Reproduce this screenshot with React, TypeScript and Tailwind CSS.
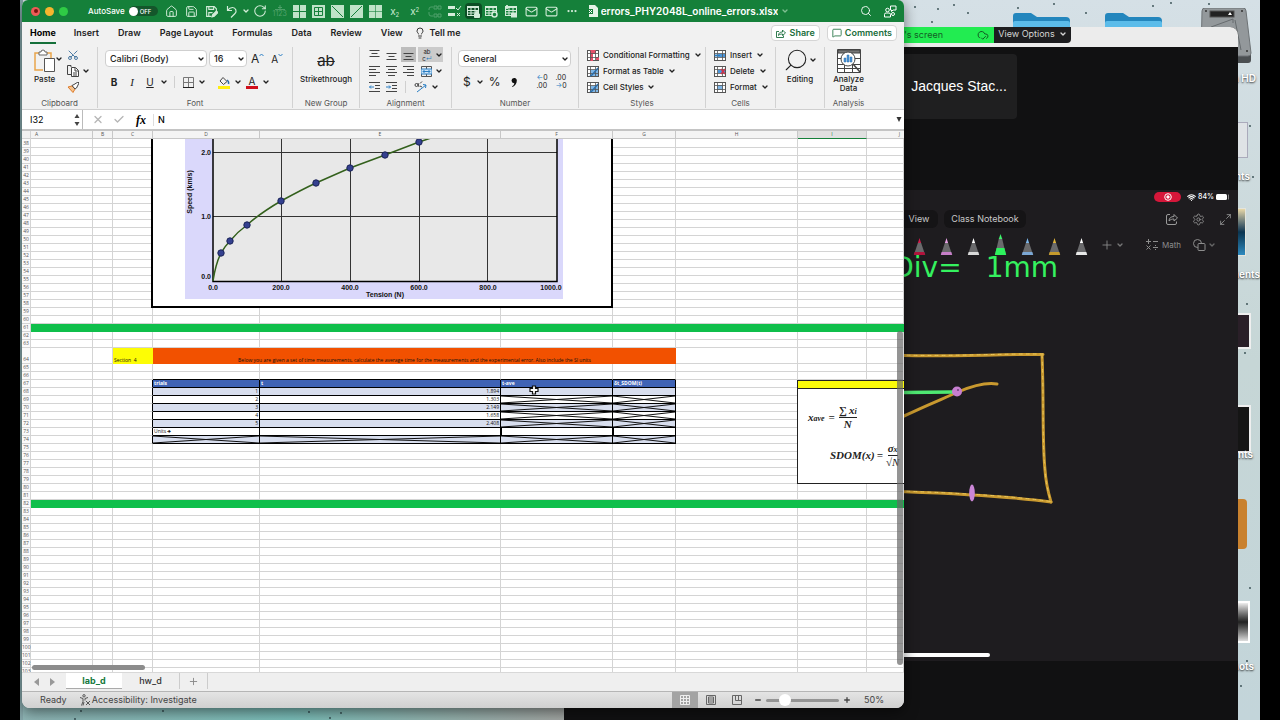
import type { ReactNode } from "react";
import {
  Check,
  ChevronDown,
  CloudCheck,
  Ellipsis,
  House,
  Lightbulb,
  Mail,
  Maximize2,
  MessageSquare,
  Minus,
  Plus,
  RotateCw,
  Save,
  Scissors,
  Search,
  Settings,
  Undo2,
  Wifi,
  X,
} from "lucide-react";

const menuTabs = ["Insert", "Draw", "Page Layout", "Formulas", "Data", "Review", "View"];

const columns = [
  { name: "A", width: 62 },
  { name: "B", width: 20 },
  { name: "C", width: 40 },
  { name: "D", width: 107 },
  { name: "E", width: 241 },
  { name: "F", width: 112 },
  { name: "G", width: 63 },
  { name: "H", width: 122 },
  { name: "I", width: 69 },
];

const trials = ["1.894", "1.303", "2.149", "1.658", "2.408"];

const rowNumbers = Array.from({ length: 66 }, (_, i) => 38 + i);

const chartPoints = [
  [221, 253],
  [230, 241],
  [247, 225],
  [281, 201],
  [316, 183],
  [350, 168],
  [385, 155],
  [419, 142],
];

const pens = [
  { tip: "#d01c4a", base: "#b3123c", raised: false },
  { tip: "#e9a3e6", base: "#c77fc9", raised: false },
  { tip: "#ffffff", base: "#d9d9d9", raised: false },
  { tip: "#3df56b", base: "#2df25d", raised: true },
  { tip: "#7db8ee", base: "#7ba7d4", raised: false },
  { tip: "#e0b53a", base: "#c59a2c", raised: false },
  { tip: "#ffffff", base: "#e8e8e8", raised: false },
];

function Chevron({ className = "text-[#222]" }: { className?: string }) {
  return <ChevronDown size={8} strokeWidth={4} className={`shrink-0 ${className}`} />;
}

function IconButton({ label, className = "", children }: { label: string; className?: string; children: ReactNode }) {
  return (
    <button aria-label={label} className={`flex items-center justify-center shrink-0 ${className}`}>
      {children}
    </button>
  );
}

/* ---------- title bar ---------- */

function BorderIcon({ kind }: { kind: string }) {
  return (
    <svg width="13" height="13" viewBox="0 0 13 13" fill="none" stroke="#15803a" strokeWidth="1">
      <rect x="0.5" y="0.5" width="12" height="12" fill="#bfe3c8" stroke="#bfe3c8" />
      {kind === "cross" && <path d="M6.5 0v13M0 6.5h13" />}
      {kind === "box" && <path d="M2.5 2.5h8v8h-8zM6.5 2v9M2 6.5h9" />}
      {kind === "down" && <path d="M1 1l11 11" />}
      {kind === "up" && <path d="M12 1L1 12" />}
      {kind === "dotted" && <path d="M6.5 0v13M0 6.5h13" strokeWidth="0.6" />}
    </svg>
  );
}

function SheetIcon({ badge }: { badge: string }) {
  return (
    <svg width="13" height="13" viewBox="0 0 13 13" fill="none" stroke="#d3ecd9" strokeWidth="1">
      <rect x="0.5" y="1.5" width="11" height="9" />
      <path d="M0.5 2.5h11M0.5 5.5h11M0.5 8h11M4 2v9M8 2v9" />
      {badge === "lock" && <path d="M7.5 9h5v3.5h-5zM8.5 9V7.5a1.5 1.5 0 0 1 3 0V9" fill="#d3ecd9" />}
      {badge === "gear" && <circle cx="9.5" cy="9.5" r="2.5" fill="#15803a" strokeWidth="1.5" />}
      {badge === "arrows" && <path d="M6 9h6M6 11.5h6M2 0v4" strokeWidth="1.8" />}
    </svg>
  );
}

function ScriptX({ sup }: { sup: boolean }) {
  return (
    <span className="text-[10px] leading-3 text-[#c9e8d0]">
      x{sup ? <sup className="text-[6px]">2</sup> : <sub className="text-[6px]">2</sub>}
    </span>
  );
}

function TitleBar() {
  const slot = "w-5 h-5 text-[#d3ecd9]";
  return (
    <header className="h-[22px] shrink-0 bg-[#15803a] flex items-center pl-[9px] pr-1 text-white">
      <div className="flex gap-[5px]">
        <IconButton label="Close" className="size-[9px] rounded-full bg-[#ee5b56]">
          <span className="size-1 rounded-full bg-[#7a1210]" />
        </IconButton>
        <IconButton label="Minimize" className="size-[9px] rounded-full bg-[#f6b52e]">{null}</IconButton>
        <IconButton label="Zoom window" className="size-[9px] rounded-full bg-[#2fcb45]">{null}</IconButton>
      </div>
      <label className="ml-5 flex items-center gap-1 text-[8px] font-medium">
        AutoSave
        <span className="relative flex h-[10px] w-[29px] items-center rounded-full bg-[#14562b]">
          <input type="checkbox" className="absolute inset-0 appearance-none rounded-full" />
          <span className="size-[9px] rounded-full bg-white" />
          <span className="ml-[2px] text-[6px]">OFF</span>
        </span>
      </label>
      <nav className="ml-1 flex items-center" aria-label="Quick access">
        <IconButton label="Home" className={slot}><House size={13} strokeWidth={1.8} /></IconButton>
        <IconButton label="Save" className={slot}><Save size={13} strokeWidth={1.8} /></IconButton>
        <IconButton label="Save as" className={slot}>
          <svg width="13" height="13" viewBox="0 0 24 24" fill="none" stroke="currentColor" strokeWidth="2">
            <path d="M12 21H3V3h14l4 4v4M7 3v5h9V3M7 21v-7h7" />
            <path d="M13 22l1-4 7-7 3 3-7 7z" fill="currentColor" />
          </svg>
        </IconButton>
        <IconButton label="Undo" className={slot}>
          <svg width="12" height="13" viewBox="0 0 12 13" fill="none" stroke="currentColor" strokeWidth="1.2">
            <path d="M1.500 1v4.500H6M1.500 5.500C3 3.500 4.500 2.500 6.500 2.500a3.500 3.500 0 0 1 2.500 6L5 12.500" />
          </svg>
        </IconButton>
        <IconButton label="Undo history" className="w-2"><Chevron className="text-[#d3ecd9]" /></IconButton>
        <IconButton label="Redo" className={slot}><RotateCw size={14} strokeWidth={1.8} /></IconButton>
        <IconButton label="Spelling" className={`${slot} opacity-30 flex-col`}>
          <svg width="10" height="5" viewBox="0 0 10 5" stroke="currentColor" fill="none"><path d="M0 4.5h10M3 2.5h4M5 0v4" /></svg>
          <span className="text-[7px] leading-[7px]">1123</span>
        </IconButton>
        {["cross", "box", "down", "up", "dotted"].map((k) => (
          <IconButton key={k} label={`Border ${k}`} className="h-5 w-[19px]"><BorderIcon kind={k} /></IconButton>
        ))}
        <IconButton label="Subscript" className={slot}><ScriptX sup={false} /></IconButton>
        <IconButton label="Superscript" className={slot}><ScriptX sup /></IconButton>
        <IconButton label="Trace" className={`${slot} opacity-30`}>
          <svg width="14" height="13" viewBox="0 0 14 13" fill="none" stroke="currentColor">
            <path d="M5 2H3a2 2 0 0 0-2 2v1M6 1h3v3H6zM10 1h3v3h-3zM6 9h3v3H6zM10 9h3v3h-3zM1 7v2a2 2 0 0 0 2 2h2" />
          </svg>
        </IconButton>
        <IconButton label="Tick list" className={slot}>
          <svg width="14" height="12" viewBox="0 0 14 12" fill="none" stroke="currentColor">
            <path d="M0 2.5h7M0 9.5h7" strokeWidth="3" /><path d="M8 3l2 2 3-4M9 8l3 3M12 8l-3 3" />
          </svg>
        </IconButton>
        <IconButton label="Protect sheet" className="h-4 w-[17px] rounded-sm bg-[#0c4f25]"><SheetIcon badge="lock" /></IconButton>
        <IconButton label="Sheet options" className={slot}><SheetIcon badge="gear" /></IconButton>
        <IconButton label="Sheet order" className={slot}><SheetIcon badge="arrows" /></IconButton>
        <IconButton label="Mail" className={slot}><Mail size={13} strokeWidth={2} /></IconButton>
        <IconButton label="Send copy" className={slot}><Mail size={13} strokeWidth={2} /></IconButton>
        <IconButton label="More" className={slot}><Ellipsis size={12} strokeWidth={2.5} /></IconButton>
      </nav>
      <div className="ml-[6px] flex min-w-0 items-center gap-[3px]">
        <svg width="10" height="12" viewBox="0 0 10 12" className="shrink-0">
          <path d="M1 0h6l3 3v9H1z" fill="#e3f3e6" />
          <path d="M0 4h5v5H0z" fill="#15803a" />
          <path d="M1 5l3 3M4 5L1 8" stroke="#fff" />
        </svg>
        <h1 className="truncate text-[10px] font-semibold">errors_PHY2048L_online_errors.xlsx</h1>
        <Chevron className="text-[#7fbf92]" />
      </div>
      <div className="ml-auto flex items-center gap-1">
        <IconButton label="Search" className="size-5"><Search size={12} strokeWidth={1.8} /></IconButton>
        <IconButton label="Presence" className="size-5">
          <svg width="13" height="13" viewBox="0 0 13 13" fill="none" stroke="#fff">
            <circle cx="3.5" cy="5" r="1.8" /><path d="M0.5 12V9.5a1.5 1.5 0 0 1 1.500-1.500h3a1.500 1.500 0 0 1 1.500 1.500V12z" />
            <path d="M6.5 1h5.5v4H9L7.5 6.5V5h-1z" /><circle cx="9" cy="9" r="1.5" />
          </svg>
        </IconButton>
      </div>
    </header>
  );
}

/* ---------- ribbon ---------- */

function MenuRow() {
  return (
    <div className="flex h-[22px] shrink-0 items-center gap-[19px] pl-2 pr-[7px] text-[9px] font-semibold text-[#222]">
      <button className="-mr-px h-[20px] self-end border-b-2 border-[#15703a] font-bold text-black">Home</button>
      {menuTabs.map((t) => (
        <button key={t}>{t}</button>
      ))}
      <button className="-ml-2 flex items-center gap-1">
        <Lightbulb size={12} strokeWidth={1.8} />
        Tell me
      </button>
      <div className="ml-auto flex gap-[7px] text-[#1b6e3c]">
        <button className="flex h-4 items-center gap-1 rounded-sm border border-[#d5d5d5] bg-white px-1">
          <svg width="10" height="9" viewBox="0 0 10 9" fill="none" stroke="currentColor">
            <path d="M3 2.5H0.5v6h7V6.500M2.500 6.500c0-2.500 1.500-3.500 4-3.500V1L9.500 4 6.500 6.500V5c-2 0-3 0.300-4 1.500z" strokeWidth="0.900" />
          </svg>
          Share
        </button>
        <button className="flex h-4 items-center gap-[3px] rounded-sm border border-[#d5d5d5] bg-white px-1">
          <MessageSquare size={10} strokeWidth={2} />
          Comments
        </button>
      </div>
    </div>
  );
}

function Group({ name, className, children }: { name: string; className: string; children: ReactNode }) {
  return (
    <section className={`flex h-[61px] shrink-0 flex-col border-r border-[#d2d2d2] ${className}`}>
      <div className="flex-1">{children}</div>
      <p className="text-center text-[8px] leading-[10px] text-[#555]">{name}</p>
    </section>
  );
}

function Lines({ widths, align }: { widths: number[]; align: string }) {
  return (
    <svg width="11" height="12" viewBox="0 0 11 12" stroke="#444">
      {widths.map((w, i) => {
        const x = align === "left" ? 0 : align === "right" ? 11 - w : (11 - w) / 2;
        return <path key={i} d={`M${x} ${i * 3 + 1.5}h${w}`} />;
      })}
    </svg>
  );
}

function IndentIcon({ flip }: { flip: boolean }) {
  return (
    <svg width="11" height="12" viewBox="0 0 11 12" fill="none" stroke="#444">
      <path d="M0 1.5h11M6 4.5h5M6 7.5h5M0 10.5h11" />
      <path d={flip ? "M0 6h4.5M3 4.5L4.5 6 3 7.5" : "M0.5 6H5M2 4.5L0.5 6 2 7.5"} stroke="#2b7fc4" />
    </svg>
  );
}

function TableGlyph({ kind }: { kind: string }) {
  return (
    <svg width="12" height="11" viewBox="0 0 12 11" fill="none" stroke="#555">
      <rect x="0.5" y="0.5" width="11" height="10" fill="#fff" />
      {kind === "cond" && <path d="M3 0h3v11H3zM6 0h3v4H6zM9 7h3v3H9z" fill="#e5506a" stroke="none" />}
      {(kind === "table" || kind === "style") && <path d="M3 4h8v6H3z" fill="#7fb6e6" stroke="none" />}
      {(kind === "insert" || kind === "delete") && <path d="M4 4h7v3H4z" fill="#4b95d8" stroke="none" />}
      {kind === "format" && <path d="M3 3h6v5H3z" fill="#7fb6e6" stroke="none" />}
      <path d="M0.5 3.5h11M0.5 7.5h11M3.5 0.5v10M8.5 0.5v10" strokeWidth="0.8" />
      {(kind === "table" || kind === "style") && <path d="M11 2L5 9l-2 1" stroke="#2c6da8" strokeWidth="1.5" />}
      {kind === "insert" && <path d="M6 5.5H1M3 3.5L1 5.5l2 2" stroke="#2b7fc4" />}
      {kind === "delete" && <path d="M7 3l4 5M11 3L7 8" stroke="#d4334a" strokeWidth="1.3" />}
    </svg>
  );
}

function MenuButton({ glyph, label }: { glyph: string; label: string }) {
  return (
    <button className="flex h-4 items-center gap-1 text-[8px] font-medium">
      <TableGlyph kind={glyph} />
      {label}
      <Chevron />
    </button>
  );
}

function Dropdown({ label, value, className }: { label: string; value: string; className: string }) {
  return (
    <span className={`relative flex items-center ${className}`}>
      <select
        aria-label={label}
        className="h-[17px] w-full appearance-none rounded-sm border border-[#cfcfcf] bg-white pl-1 text-[9px] font-medium leading-3 text-[#222]"
      >
        <option>{value}</option>
      </select>
      <span className="pointer-events-none absolute right-[2px]"><Chevron /></span>
    </span>
  );
}

function Divider() {
  return <span className="h-3 w-px bg-[#cfcfcf]" />;
}

function Ribbon() {
  return (
    <div className="flex h-[66px] shrink-0 overflow-hidden border-b border-[#cfcfcf] pt-[3px] text-[#222]">
      <Group name="Clipboard" className="w-[76px]">
        <div className="flex pl-3">
          <button className="flex flex-col items-center text-[8px] font-medium leading-3">
            <svg width="21" height="24" viewBox="0 0 21 24" fill="none" className="mt-[2px]">
              <path d="M5 4H1v17h8M13 4h4v5" stroke="#e8a44a" strokeWidth="1.5" />
              <path d="M5 6V3h2a2 2 0 0 1 4 0h2v3z" fill="#fff" stroke="#666" />
              <path d="M10.5 9.5h10v13h-10z" fill="#fff" stroke="#555" />
            </svg>
            Paste
          </button>
          <span className="mt-2"><Chevron /></span>
          <div className="ml-1 flex flex-col">
            <IconButton label="Cut" className="h-4 w-3"><Scissors size={12} strokeWidth={1.8} className="-rotate-90 text-[#3c6f9c]" /></IconButton>
            <button aria-label="Copy" className="flex h-4 items-center gap-[3px]">
              <svg width="12" height="12" viewBox="0 0 12 12" fill="none" stroke="#444">
                <path d="M4 2V0.5H0.5v9H4" /><path d="M4.5 2.5h4l3 3v6h-7zM8 3v3h3M6 8h4M6 10h4" fill="#fff" />
              </svg>
              <Chevron />
            </button>
            <IconButton label="Format painter" className="h-4 w-3">
              <svg width="12" height="11" viewBox="0 0 12 11" fill="none">
                <path d="M1 5l5 5.5 2-3.5-3-3z" fill="#f6c28b" stroke="#dd7b2a" />
                <path d="M5 3.5l3 3.5 1.5-1L12 1l-1-1-4 2.5z" fill="#fff" stroke="#444" />
              </svg>
            </IconButton>
          </div>
        </div>
      </Group>

      <Group name="Font" className="w-[195px]">
        <div className="flex items-center gap-[2px] pl-[7px] pt-[3px]">
          <Dropdown label="Font" value="Calibri (Body)" className="w-[102px]" />
          <Dropdown label="Font size" value="16" className="w-[38px]" />
          <IconButton label="Grow font" className="ml-[2px] text-[12px] leading-4">
            A
            <svg width="5" height="4" viewBox="0 0 5 4" fill="none" stroke="#2b7fc4" className="mb-2"><path d="M0.500 3L2.500 1l2 2" /></svg>
          </IconButton>
          <IconButton label="Shrink font" className="ml-[5px] text-[10px] leading-4">
            A
            <svg width="5" height="4" viewBox="0 0 5 4" fill="none" stroke="#2b7fc4" className="mb-2"><path d="M0.500 1l2 2 2-2" /></svg>
          </IconButton>
        </div>
        <div className="mt-[6px] flex h-[18px] items-center pl-3 text-[10px]">
          <button className="w-2 font-bold">B</button>
          <button className="ml-[10px] w-2 font-['Liberation_Serif',serif] text-[11px] italic">I</button>
          <button className="ml-[10px] w-2 underline">U</button>
          <IconButton label="Underline style" className="ml-[6px] mr-[6px]"><Chevron /></IconButton>
          <Divider />
          <IconButton label="Borders" className="ml-2 gap-1">
            <svg width="11" height="11" viewBox="0 0 11 11" fill="none" stroke="#777"><path d="M0.5 0.5h10v10h-10zM5.5 0v11M0 5.5h11" /><path d="M0 10.5h11" stroke="#222" /></svg>
            <Chevron />
          </IconButton>
          <span className="mx-[6px]"><Divider /></span>
          <IconButton label="Fill color" className="gap-1">
            <svg width="12" height="13" viewBox="0 0 12 13" fill="none" stroke="#444">
              <path d="M5 1.5l4 4-3.5 3-3.5-3.5z" /><path d="M9 4c1.5 1 2 2 1.5 4" stroke="#2b6ca8" strokeWidth="1.5" />
              <path d="M0 10h12v3H0z" fill="#ffee10" stroke="none" />
            </svg>
            <Chevron />
          </IconButton>
          <IconButton label="Font color" className="ml-1 gap-1">
            <span className="w-3 border-b-[3px] border-[#d00f1b] text-[10px] leading-[10px]">A</span>
            <Chevron />
          </IconButton>
        </div>
      </Group>

      <Group name="New Group" className="w-[67px]">
        <button className="flex w-full flex-col items-center text-[8px] font-medium leading-3">
          <span className="mt-[3px] h-[22px] text-[15px] font-normal leading-[22px] line-through decoration-1">ab</span>
          <span className="mt-px">Strikethrough</span>
        </button>
      </Group>

      <Group name="Alignment" className="w-[92px]">
        <div className="grid grid-cols-[17px_17px_17px_auto] justify-start pl-[7px]">
          <IconButton label="Top align" className="h-4 w-[15px]"><Lines align="center" widths={[10, 6, 10]} /></IconButton>
          <IconButton label="Middle align" className="h-4 w-[15px]"><Lines align="center" widths={[0, 10, 6, 10]} /></IconButton>
          <IconButton label="Bottom align" className="h-[15px] w-[15px] bg-[#bdbdbd]"><Lines align="center" widths={[0, 10, 6, 10]} /></IconButton>
          <button aria-label="Wrap text" className="flex h-[15px] items-center gap-[2px] bg-[#cbcbcb] pl-[3px] text-[6px] leading-[7px]">
            <span className="w-3">ab<br />c<span className="text-[#2b7fc4]">↵</span></span>
            <Chevron />
          </button>
          <IconButton label="Align left" className="h-4 w-[15px]"><Lines align="left" widths={[11, 7, 11, 7]} /></IconButton>
          <IconButton label="Align center" className="h-4 w-[15px]"><Lines align="center" widths={[11, 7, 11, 7]} /></IconButton>
          <IconButton label="Align right" className="h-4 w-[15px]"><Lines align="right" widths={[11, 7, 11, 7]} /></IconButton>
          <button aria-label="Merge cells" className="flex h-4 items-center gap-[3px] pl-[3px]">
            <svg width="11" height="11" viewBox="0 0 11 11" fill="none" stroke="#555">
              <path d="M0.5 0.5h10v10h-10zM5.5 0v3M5.5 8v3" /><path d="M0 3h11v5H0z" fill="#cfe5f7" stroke="#2b7fc4" />
              <path d="M2 5.5h7M3.5 4L2 5.5 3.5 7M7.5 4L9 5.5 7.5 7" stroke="#2b7fc4" />
            </svg>
            <Chevron />
          </button>
          <IconButton label="Decrease indent" className="h-4 w-[15px]"><IndentIcon flip={false} /></IconButton>
          <IconButton label="Increase indent" className="h-4 w-[15px]"><IndentIcon flip /></IconButton>
          <button aria-label="Orientation" className="col-span-2 flex h-4 items-center gap-1 pl-1">
            <Divider />
            <svg width="13" height="12" viewBox="0 0 13 12" fill="none" stroke="#444" className="ml-1">
              <circle cx="2.5" cy="4" r="1.5" /><path d="M4 2l1 4M6 2.5l2-2M6 5l2 1" /><path d="M3 11l9-7M9 3.5l3 0.5-0.5 3" stroke="#2b7fc4" />
            </svg>
            <Chevron />
          </button>
        </div>
      </Group>

      <Group name="Number" className="w-[127px]">
        <div className="pl-[6px] pt-[3px]"><Dropdown label="Number format" value="General" className="w-[113px]" /></div>
        <div className="mt-[6px] flex h-[18px] items-center pl-[11px] text-[12px]">
          <button aria-label="Currency">$</button>
          <IconButton label="Currency list" className="ml-[5px]"><Chevron /></IconButton>
          <button aria-label="Percent" className="ml-[5px]">%</button>
          <svg width="6" height="9" viewBox="0 0 6 9" className="ml-[10px]" role="img" aria-label="Comma style">
            <path d="M3 0a2.500 2.500 0 0 1 2.800 2.800C5.800 5.500 4 8 1.500 9l-0.500-0.800C2.500 7.500 3.300 6.300 3.300 5.200A2.600 2.600 0 1 1 3 0z" fill="#111" />
          </svg>
          <span className="ml-3 mr-2"><Divider /></span>
          <button aria-label="Increase decimal" className="w-[19px] text-left text-[7px] leading-[8px]"><span className="text-[#2b7fc4]">←</span>0<br />.00</button>
          <button aria-label="Decrease decimal" className="w-[19px] text-left text-[7px] leading-[8px]">.00<br /><span className="text-[#2b7fc4]">→</span>0</button>
        </div>
      </Group>

      <Group name="Styles" className="w-[127px]">
        <div className="pl-2">
          <MenuButton glyph="cond" label="Conditional Formatting" />
          <MenuButton glyph="table" label="Format as Table" />
          <MenuButton glyph="style" label="Cell Styles" />
        </div>
      </Group>

      <Group name="Cells" className="w-[70px]">
        <div className="pl-2">
          <MenuButton glyph="insert" label="Insert" />
          <MenuButton glyph="delete" label="Delete" />
          <MenuButton glyph="format" label="Format" />
        </div>
      </Group>

      <Group name="" className="w-[49px]">
        <button className="flex flex-col items-center pl-[7px] text-[8px] font-medium leading-3">
          <span className="flex h-[26px] items-center">
            <Search size={26} strokeWidth={1} className="-scale-x-100" />
            <Chevron />
          </span>
          Editing
        </button>
      </Group>

      <section className="flex h-[61px] w-[47px] shrink-0 flex-col text-center">
        <button className="flex flex-1 flex-col items-center text-[8px] font-medium leading-[9px]">
          <svg width="24" height="24" viewBox="0 0 24 24" fill="none" stroke="#444" className="mt-[2px] mb-[2px]">
            <path d="M0.5 0.5h23v23h-23z" fill="#fff" /><path d="M1 1h22v3H1z" fill="#777" />
            <path d="M0 9.5h23M0 15.5h23M0 19.5h23M7.5 16v7M15.5 16v7" />
            <circle cx="11" cy="10" r="7" fill="#fff" /><path d="M16 15l7 8" strokeWidth="1.5" />
            <path d="M7 9h2v4H7zM10 6h2v7h-2zM13 8h2v5h-2z" fill="#4b95d8" stroke="#2c6da8" strokeWidth="0.5" />
          </svg>
          Analyze
          <br />
          Data
        </button>
        <p className="text-[8px] leading-[10px] text-[#555]">Analysis</p>
      </section>
    </div>
  );
}

function FormulaBar() {
  return (
    <div className="flex h-[20px] shrink-0 items-center border-b border-[#c4c4c4] bg-white text-[9px] text-black">
      <input aria-label="Name box" defaultValue="I32" className="h-full w-[52px] pl-2" />
      <svg width="6" height="12" viewBox="0 0 6 12" fill="#444"><path d="M3 0l2.5 4h-5zM3 12l2.5-4h-5z" /></svg>
      <span className="ml-[2px] h-full w-px bg-[#bbb]" />
      <IconButton label="Cancel" className="ml-[9px] w-3 text-[#b5b5b5]"><X size={13} strokeWidth={2.5} /></IconButton>
      <IconButton label="Enter" className="ml-[9px] w-3 text-[#b5b5b5]"><Check size={13} strokeWidth={2.5} /></IconButton>
      <IconButton label="Insert function" className="ml-[10px] w-3 font-['Liberation_Serif',serif] text-[12px] font-bold italic">fx</IconButton>
      <span className="ml-[6px] h-3 w-px bg-[#ddd]" />
      <input aria-label="Formula" defaultValue="N" className="h-full min-w-0 flex-1 pl-1 font-medium" />
      <svg width="6" height="5" viewBox="0 0 6 5" fill="#333" className="mr-[2px]"><path d="M0.5 0h5L3 5z" /></svg>
    </div>
  );
}

/* ---------- worksheet ---------- */

const cell = "h-2 p-0 border-b border-r border-[#d4d4d4]";
const dataCell = "h-2 px-px py-0 border-b border-r border-black overflow-hidden whitespace-nowrap";

function Crossed({ shade }: { shade: boolean }) {
  return (
    <td className={`h-2 p-0 border-b border-r border-black ${shade ? "bg-[#d8deee]" : "bg-white"}`}>
      <svg width="100%" height="7" viewBox="0 0 100 7" preserveAspectRatio="none" className="block">
        <path d="M0 0L100 7M100 0L0 7" stroke="#111" vectorEffect="non-scaling-stroke" />
      </svg>
    </td>
  );
}

function Blank({ n }: { n: number }) {
  return (
    <>
      {Array.from({ length: n }, (_, i) => (
        <td key={i} className={cell} />
      ))}
    </>
  );
}

/* columns A to C, closed by the left edge of the trials table */
function TableLead() {
  return (
    <>
      <Blank n={2} />
      <td className="h-2 border-b border-r border-b-[#d4d4d4] border-r-black p-0" />
    </>
  );
}

function RowCells({ row }: { row: number }) {
  if (row === 61 || row === 82) {
    return <td colSpan={10} className="h-2 bg-[#0fbf4b] p-0" />;
  }
  if (row === 64) {
    return (
      <>
        <Blank n={2} />
        <td className="h-4 overflow-hidden whitespace-nowrap bg-[#fdfd05] p-0 pl-px align-bottom">Section&nbsp; 4</td>
        <td colSpan={4} className="bg-[#f25100] p-0 text-center align-bottom">
          Below you are given a set of time measurements, calculate the average time for the measurements and the experimental error. Also include the SI units
        </td>
        <Blank n={3} />
      </>
    );
  }
  if (row === 66) {
    return (
      <>
        <Blank n={3} />
        {["D", "E", "F", "G"].map((c) => (
          <td key={c} className="h-2 border-b border-r border-b-black border-r-[#d4d4d4] p-0" />
        ))}
        <Blank n={3} />
      </>
    );
  }
  if (row === 67) {
    return (
      <>
        <TableLead />
        {["trials", "t", "t-ave", "δt_SDOM(t)"].map((h) => (
          <th key={h} className={`${dataCell} bg-[#3f63b5] text-left font-bold text-white`}>{h}</th>
        ))}
        <Blank n={3} />
      </>
    );
  }
  if (row >= 68 && row <= 72) {
    const i = row - 68;
    const shade = i % 2 === 0;
    const bg = shade ? "bg-[#d8deee]" : "bg-white";
    return (
      <>
        <TableLead />
        <td className={`${dataCell} text-right ${bg}`}>{i + 1}</td>
        <td className={`${dataCell} text-right ${bg}`}>{trials[i]}</td>
        {i === 0 ? (
          <>
            <td className={`${dataCell} ${bg}`} />
            <td className={`${dataCell} ${bg}`} />
          </>
        ) : (
          <>
            <Crossed shade={shade} />
            <Crossed shade={shade} />
          </>
        )}
        <Blank n={3} />
      </>
    );
  }
  if (row === 73) {
    return (
      <>
        <TableLead />
        <td className={`${dataCell} bg-white`}>Units 🡺</td>
        <td className={`${dataCell} bg-white`} />
        <td className={`${dataCell} border-l bg-white`} />
        <td className={`${dataCell} border-l bg-white`} />
        <Blank n={3} />
      </>
    );
  }
  if (row === 74) {
    return (
      <>
        <TableLead />
        <Crossed shade />
        <Crossed shade />
        <Crossed shade />
        <Crossed shade />
        <Blank n={3} />
      </>
    );
  }
  return <Blank n={10} />;
}

function TensionChart() {
  return (
    <div className="absolute left-[129px] top-2 h-[169px] w-[462px] border-x-2 border-b-2 border-black bg-white">
      <svg width="458" height="167" viewBox="153 139 458 167" className="block">
        <rect x="185" y="139" width="378" height="160" fill="#dad8fb" />
        <rect x="213" y="139" width="344" height="142" fill="#e8e8e8" />
        <g stroke="#333">
          <path d="M213 152.5h344M213 216.5h344" />
          <path d="M281.5 139v142M350.5 139v142M419.5 139v142M487.5 139v142" />
          <path d="M213 139v142.5h344V139" fill="none" stroke="#000" strokeWidth="1.5" />
        </g>
        <path
          d="M213 281C215 268 217 261 221 253C224 248 226 245 230 241C235 235 240 230 247 225C257 216 269 208 281 201C292 195 303 189 316 183L350 168L385 155L419 142L434 137"
          fill="none"
          stroke="#33601c"
          strokeWidth="1.5"
        />
        {chartPoints.map(([x, y]) => (
          <circle key={x} cx={x} cy={y} r="3.2" fill="#34408f" stroke="#1b2458" />
        ))}
        <g className="font-['Liberation_Sans',sans-serif] text-[7px] font-bold" fill="#111">
          <g textAnchor="end">
            <text x="211" y="155">2.0</text>
            <text x="211" y="219">1.0</text>
            <text x="211" y="279">0.0</text>
          </g>
          <g textAnchor="middle">
            <text x="213" y="290">0.0</text>
            <text x="281" y="290">200.0</text>
            <text x="350" y="290">400.0</text>
            <text x="419" y="290">600.0</text>
            <text x="488" y="290">800.0</text>
            <text x="551" y="290">1000.0</text>
            <text x="385" y="297">Tension (N)</text>
            <text transform="translate(192 192) rotate(-90)">Speed (km/s)</text>
          </g>
        </g>
      </svg>
    </div>
  );
}

function FormulaCard() {
  return (
    <div className="absolute left-[775px] right-0 top-[249px] h-[104px] border-y border-l border-[#222] bg-white font-['Liberation_Serif',serif] text-[11px] font-bold italic leading-[13px] text-[#222]">
      <div className="h-2 border-b border-[#222] bg-[#fbfb0a]" />
      <div className="mt-[15px] flex items-center gap-1 pl-[10px]">
        <span className="flex items-end">x<span className="text-[8px] leading-[10px]">ave</span></span>
        <span>=</span>
        <span className="flex flex-col items-center">
          <span className="flex items-end border-b border-[#222]">∑&thinsp;x<span className="text-[8px] leading-[10px]">i</span></span>
          <span>N</span>
        </span>
      </div>
      <div className="mt-[11px] flex items-center gap-[2px] pl-8">
        <span>SDOM(x)</span>
        <span>=</span>
        <span className="ml-px flex flex-col items-center">
          <span className="flex items-end border-b border-[#222]">σ<span className="text-[8px] leading-[10px]">x</span></span>
          <span className="font-normal">√N</span>
        </span>
      </div>
    </div>
  );
}

function Worksheet() {
  return (
    <div className="relative min-h-0 flex-1 overflow-hidden border-t border-[#c4c4c4] bg-white">
      <table className="w-full table-fixed border-separate border-spacing-0 font-['Open_Sans',sans-serif] text-[5px] leading-[7px] text-[#111]">
        <colgroup>
          <col className="w-[9px]" />
          {columns.map((c) => (
            <col key={c.name} style={{ width: c.width }} />
          ))}
          <col />
        </colgroup>
        <thead>
          <tr className="text-[#555]">
            <th className={`${cell} bg-[#f2f2f2]`} />
            {columns.map((c) => (
              <th
                key={c.name}
                className={`h-2 border-b border-r p-0 font-normal ${c.name === "I" ? "border-[#c8c8c8] border-b-[#15803a] bg-[#e0e0e0] text-[#15803a]" : "border-[#c8c8c8] bg-[#f4f4f4]"} ${c.name === "A" ? "pl-1 text-left" : ""}`}
              >
                {c.name}
              </th>
            ))}
            <th className="h-2 border-b border-[#c8c8c8] bg-[#f4f4f4] p-0 pr-1 text-right font-normal">J</th>
          </tr>
        </thead>
        <tbody>
          {rowNumbers.map((row) => (
            <tr key={row} className={row === 38 ? "h-[9px]" : row === 64 ? "h-4" : "h-2"}>
              <th className={`${cell} bg-[#fafafa] align-bottom font-normal text-[#555]`}>{row}</th>
              <RowCells row={row} />
            </tr>
          ))}
        </tbody>
      </table>
      <TensionChart />
      <FormulaCard />
      <div className="absolute bottom-[7px] right-px top-[200px] w-[6px] rounded-full bg-[#666]/70" />
      <div className="absolute bottom-[2px] left-[10px] h-[5px] w-[113px] rounded-full bg-[#8c8c8c]" />
      <svg width="10" height="10" viewBox="0 0 10 10" className="absolute left-[507px] top-[254px]">
        <path d="M3.500 1h3v2.500H9v3H6.500V9h-3V6.500H1v-3h2.500z" fill="#fff" stroke="#111" strokeWidth="1.200" />
      </svg>
    </div>
  );
}

function SheetTabs() {
  return (
    <div className="flex h-[19px] shrink-0 border-t border-[#d8d8d8] bg-[#efefef] text-[9px] font-medium text-[#333]">
      <div className="flex w-11 items-center justify-center gap-[11px]">
        <IconButton label="Previous sheet"><svg width="5" height="8" viewBox="0 0 5 8" fill="#999"><path d="M5 0v8L0 4z" /></svg></IconButton>
        <IconButton label="Next sheet"><svg width="5" height="8" viewBox="0 0 5 8" fill="#999"><path d="M0 0v8l5-4z" /></svg></IconButton>
      </div>
      <button className="mb-[2px] w-[56px] border-b border-[#aaa] bg-white font-bold text-[#177a40]">lab_d</button>
      <button className="mb-[2px] w-[58px] border-r border-[#ccc]">hw_d</button>
      <IconButton label="Add sheet" className="mb-[2px] w-[28px] border-r border-[#ccc] text-[#888]"><Plus size={11} /></IconButton>
    </div>
  );
}

function StatusBar() {
  return (
    <footer className="flex h-[17px] shrink-0 items-center border-t border-[#b5b5b5] bg-linear-to-b from-[#e4e4e4] to-[#d0d0d0] text-[9px] text-[#444]">
      <span className="ml-[18px]">Ready</span>
      <button className="ml-3 flex items-center gap-px">
        <svg width="12" height="12" viewBox="0 0 12 12" fill="none" stroke="#555">
          <circle cx="5" cy="1.8" r="1.2" />
          <path d="M1 3.5l3 1v3l-1.5 4M9 3.5l-3 1v2M5 8l-1 3.5M7 7l4 4M11 7l-4 4" />
        </svg>
        Accessibility: Investigate
      </button>
      <div className="ml-auto flex h-full items-center">
        <IconButton label="Normal view" className="h-full w-[26px] bg-[#a3a3a3]">
          <svg width="10" height="10" viewBox="0 0 10 10" fill="none" stroke="#eee"><path d="M0.5 0.5h9v9h-9zM3.5 0v10M6.5 0v10M0 3.5h10M0 6.5h10" /></svg>
        </IconButton>
        <IconButton label="Page layout view" className="w-[26px]">
          <svg width="10" height="10" viewBox="0 0 10 10" fill="none" stroke="#666"><path d="M0.5 0.5h9v9h-9zM2.5 2h5v6h-5zM3 4h4M3 6h4" /></svg>
        </IconButton>
        <IconButton label="Page break view" className="w-[26px]">
          <svg width="10" height="10" viewBox="0 0 10 10" fill="none" stroke="#666"><path d="M0.5 0.5h9v9h-9zM3.5 0v5.500h3V0M6 5.5h4" /></svg>
        </IconButton>
        <IconButton label="Zoom out" className="w-4"><Minus size={8} strokeWidth={4} /></IconButton>
        <input
          type="range"
          aria-label="Zoom"
          defaultValue={21}
          className="h-[3px] w-[73px] appearance-none rounded-full bg-[#949494] [&::-webkit-slider-thumb]:size-3 [&::-webkit-slider-thumb]:appearance-none [&::-webkit-slider-thumb]:rounded-full [&::-webkit-slider-thumb]:bg-white"
        />
        <IconButton label="Zoom in" className="w-4"><Plus size={8} strokeWidth={4} /></IconButton>
        <span className="mr-5 ml-[9px]">50%</span>
      </div>
    </footer>
  );
}

function ExcelWindow() {
  return (
    <main className="absolute bottom-3 left-[2px] right-[356px] top-0 flex flex-col overflow-hidden rounded-lg rounded-t-md bg-[#f1f1f1] shadow-[0_4px_14px_rgba(0,0,0,0.5)]">
      <TitleBar />
      <MenuRow />
      <Ribbon />
      <FormulaBar />
      <Worksheet />
      <SheetTabs />
      <StatusBar />
    </main>
  );
}

/* ---------- shared screen window ---------- */

function Pen({ tip, base, raised }: { tip: string; base: string; raised: boolean }) {
  return (
    <svg width="13" height="21" viewBox="0 0 13 21">
      {raised ? (
        <>
          <path d="M5 4L1 21h11L8 4z" fill="#6a6a6c" />
          <path d="M6.5 0L4.800 5h3.400z" fill={tip} />
          <path d="M2.600 14L0.800 21h11.400l-1.800-7z" fill={base} />
        </>
      ) : (
        <>
          <path d="M5.200 8L0.800 21h11.400L7.800 8z" fill="#6a6a6c" />
          <path d="M6.500 4L4.900 9h3.200z" fill={tip} />
          <path d="M1.700 18L0.800 21h11.400l-0.900-3z" fill={base} />
        </>
      )}
    </svg>
  );
}

function Sketch() {
  return (
    <svg width="334" height="170" viewBox="904 340 334 170" fill="none" strokeLinecap="round" className="absolute right-0 top-[150px]">
      <g stroke="#c9992f" strokeWidth="3">
        <path d="M900 355.5C950 357 1000 354 1043 354.5" />
        <path d="M1042 355C1044 400 1042 440 1045 470C1046 485 1049 495 1051 502" />
        <path d="M900 491.5C940 493 1000 495 1051 502" />
        <path d="M900 418C920 408 940 400 958 392C972 386 985 382 997 384" />
      </g>
      <g stroke="#e9c65a" strokeWidth="1" strokeDasharray="3 4">
        <path d="M900 355C950 356.500 1000 353.500 1043 354" />
        <path d="M1042 355C1044 400 1042 440 1045 470C1046 485 1049 495 1051 502" />
        <path d="M900 491C940 492.500 1000 494.500 1051 501.500" />
      </g>
      <path d="M900 392.5L953 392" stroke="#4fe872" strokeWidth="3.5" />
      <circle cx="957" cy="391.5" r="5" fill="#c77fd0" />
      <circle cx="958" cy="390" r="1" fill="#6b3f78" />
      <ellipse cx="972" cy="493" rx="2.8" ry="8.500" fill="#cb86d6" />
    </svg>
  );
}

function NotebookScreen() {
  return (
    <div className="relative mt-[71px] flex h-[471px] flex-col overflow-hidden bg-[#1e1c1f] text-[#c9c9c9]">
      <div className="flex h-[14px] items-center justify-end gap-[2px] pr-2 text-[7px] font-medium text-white">
        <span className="mr-1 flex h-[10px] w-[27px] items-center justify-center rounded-full bg-[#d5173a]">
          <svg width="8" height="8" viewBox="0 0 8 8" fill="none" stroke="#fff"><circle cx="4" cy="4" r="3.3" /><circle cx="4" cy="4" r="1.2" fill="#fff" /></svg>
        </span>
        <Wifi size={9} strokeWidth={3} />
        <span>84%</span>
        <svg width="14" height="6" viewBox="0 0 14 6"><rect width="11" height="6" rx="1.5" fill="#fff" /><path d="M12.500 0.500v5" stroke="#888" /></svg>
      </div>
      <div className="mt-[6px] flex h-[18px] items-center pl-[330px] pr-[6px] text-[9px]">
        <button className="h-[18px] w-11 rounded-md bg-[#151416] pl-[6px]">View</button>
        <button className="ml-[6px] h-[18px] w-[82px] rounded-md bg-[#151416]">Class Notebook</button>
        <div className="ml-auto flex gap-[14px] text-[#9a9a9a]">
          <IconButton label="Share page">
            <svg width="12" height="12" viewBox="0 0 12 12" fill="none" stroke="currentColor">
              <path d="M4 1.5H2a1.5 1.5 0 0 0-1.5 1.5v7A1.5 1.5 0 0 0 2 11.5h7a1.5 1.5 0 0 0 1.500-1.500V8.500" />
              <path d="M3 8c0-3 2-4.500 5-4.500V1.500l3.500 3.500L8 8V6C6 6 4.500 6.500 3 8z" />
            </svg>
          </IconButton>
          <IconButton label="Settings"><Settings size={13} strokeWidth={1.5} /></IconButton>
          <IconButton label="Full screen"><Maximize2 size={13} strokeWidth={1.5} /></IconButton>
        </div>
      </div>
      <div className="mt-[6px] flex h-[21px] items-center justify-end pr-[22px] text-[8px] text-[#8d8d8d]">
        <div className="flex gap-[14px]">
          {pens.map((p, i) => (
            <button key={i} aria-label={`Pen ${i + 1}`}><Pen {...p} /></button>
          ))}
        </div>
        <IconButton label="Add pen" className="ml-3 gap-[2px]"><Plus size={14} strokeWidth={1.5} /><Chevron className="text-[#777]" /></IconButton>
        <button className="ml-[22px] flex items-center gap-1">
          <svg width="12" height="11" viewBox="0 0 12 11" stroke="currentColor"><path d="M0 2.5h5M2.5 0v5M7 2.5h5M0.5 6.5l4 4M4.5 6.5l-4 4M7 8.5h5M9.5 6v1M9.5 10v1" /></svg>
          Math
        </button>
        <IconButton label="Shapes" className="ml-3 gap-[2px]">
          <svg width="13" height="12" viewBox="0 0 13 12" fill="none" stroke="currentColor"><circle cx="4.5" cy="4.5" r="4" /><rect x="5" y="4.5" width="7" height="7" rx="1" fill="#1e1c1f" /></svg>
          <Chevron className="text-[#666]" />
        </IconButton>
      </div>
      <p className="absolute right-[180px] top-[62px] flex gap-[24px] font-['DejaVu_Sans',sans-serif] text-[28px] leading-8 text-[#35f25f]">
        <span>Div=</span>
        <span>1mm</span>
      </p>
      <Sketch />
      <div className="absolute bottom-1 left-[250px] right-[248px] h-1 rounded-full bg-white" />
    </div>
  );
}

function SharedScreenWindow() {
  return (
    <section className="absolute bottom-0 left-[544px] right-[22px] top-[27px] rounded-tr-lg bg-[#111112]">
      <div className="flex h-5 items-start rounded-tr-lg bg-[#ececec] text-[9px]">
        <div className="flex h-4 w-[430px] items-center justify-end bg-[#22ec51] pr-[5px] text-[#145c25]">
          <span className="mr-[34px]">o's screen</span>
          <CloudCheck size={12} strokeWidth={2} />
        </div>
        <button className="flex h-4 w-[77px] items-center justify-center gap-1 rounded-br-sm bg-[#1d1d1f] pb-[2px] text-[#d5d5d5]">
          View Options
          <Chevron className="text-[#d5d5d5]" />
        </button>
      </div>
      <div className="ml-[337px] mt-[7px] flex h-[65px] w-[116px] items-center justify-center rounded-sm bg-[#1f1f20] font-['Liberation_Sans',sans-serif] text-[14px] text-white">
        Jacques Stac...
      </div>
      <NotebookScreen />
    </section>
  );
}

/* ---------- desktop ---------- */

function Folder() {
  return (
    <svg width="57" height="16" viewBox="0 0 57 16">
      <path d="M0 16V3a3 3 0 0 1 3-3h15l6 4h29a4 4 0 0 1 4 4v8z" fill="#2386bd" />
      <path d="M0 16v-6a2 2 0 0 1 2-2h53a2 2 0 0 1 2 2v6z" fill="#5bbcea" />
    </svg>
  );
}

function HardDrive() {
  return (
    <svg width="52" height="56" viewBox="0 0 52 56">
      <path d="M4 40L50 46v6a3 3 0 0 1-3 3H6z" fill="#4b4f52" />
      <path d="M4 0h38a3 3 0 0 1 3 3l5 42a3 3 0 0 1-3 3H0L1 3a3 3 0 0 1 3-3z" fill="#93989b" stroke="#6e7376" />
      <rect x="9" y="3" width="24" height="6" fill="#222" stroke="#555" />
      <path d="M27 7l2-3 2 3z" fill="#fff" />
      <path d="M10 19l22-8v4M34 12l6 30" stroke="#666b6e" fill="none" />
      <circle cx="5" cy="3" r="1" fill="#333" /><circle cx="41" cy="3" r="1" fill="#333" /><circle cx="46" cy="43" r="1" fill="#333" />
    </svg>
  );
}

const labelStyle = "absolute text-[10px] font-semibold leading-3 text-white [text-shadow:0_1px_2px_rgba(0,0,0,0.8)]";
const specks = [
  [915, 7], [938, 9], [954, 5], [968, 13], [1018, 8], [1054, 4], [1086, 13], [1153, 6], [1171, 3], [1209, 4], [932, 22], [1250, 126],
  [1253, 177], [1247, 304], [1245, 353], [1250, 588], [1247, 661], [1241, 686], [81, 711], [163, 711], [75, 719], [309, 712], [341, 713], [330, 718],
];

export default function App() {
  return (
    <div className="h-screen overflow-hidden bg-black px-5 font-['Inter','Liberation_Sans',sans-serif]">
      <div className="relative h-full overflow-hidden bg-linear-to-b from-[#d5e0e6] via-[#c6d6d6] to-[#c3d5da]">
        <div className="absolute bottom-0 left-0 h-4 w-[544px] bg-linear-to-r from-[#8fb5b5] via-[#7bbfba] to-[#a3a7a4]" />
        <div className="absolute inset-y-0 left-0 w-[3px] bg-[#84a5a8]" />
        <svg width="1240" height="720" viewBox="20 0 1240 720" className="absolute left-0 top-0" fill="#31484c">
          {specks.map(([x, y]) => (
            <circle key={`${x}-${y}`} cx={x} cy={y} r="0.9" />
          ))}
        </svg>
        <div className="absolute right-[190px] top-[13px]"><Folder /></div>
        <div className="absolute right-[98px] top-[13px]"><Folder /></div>
        <div className="absolute right-[7px] top-2"><HardDrive /></div>
        <span className={`${labelStyle} right-[4px] top-[72px]`}>n HD</span>
        <div className="absolute right-3 top-[122px] h-9 w-6 border border-[#aab] bg-[#dfe3e6]" />
        <span className={`${labelStyle} right-[10px] top-[170px]`}>nts</span>
        <div className="absolute right-[14px] top-[208px] h-[48px] w-6 border border-[#e5e5dc] bg-linear-to-b from-[#e8d8a8] via-[#0a3550] to-[#2f8bc0]" />
        <span className={`${labelStyle} right-0 top-[268px]`}>ments</span>
        <div className="absolute right-[9px] top-[313px] h-9 w-6 border-2 border-[#efefef] bg-[#2a1f28]" />
        <div className="absolute right-[9px] top-[405px] h-12 w-6 border-2 border-[#efefef] bg-[#151515]" />
        <span className={`${labelStyle} right-[7px] top-[448px]`}>nts</span>
        <div className="absolute right-[13px] top-[499px] h-[50px] w-6 rounded-sm bg-[#c9812e]" />
        <div className="absolute right-[10px] top-[601px] h-[42px] w-6 border-2 border-white bg-linear-to-b from-[#eee] via-[#222] to-[#ddd]" />
        <span className={`${labelStyle} right-[6px] top-[660px]`}>hots</span>
        <SharedScreenWindow />
        <ExcelWindow />
      </div>
    </div>
  );
}
